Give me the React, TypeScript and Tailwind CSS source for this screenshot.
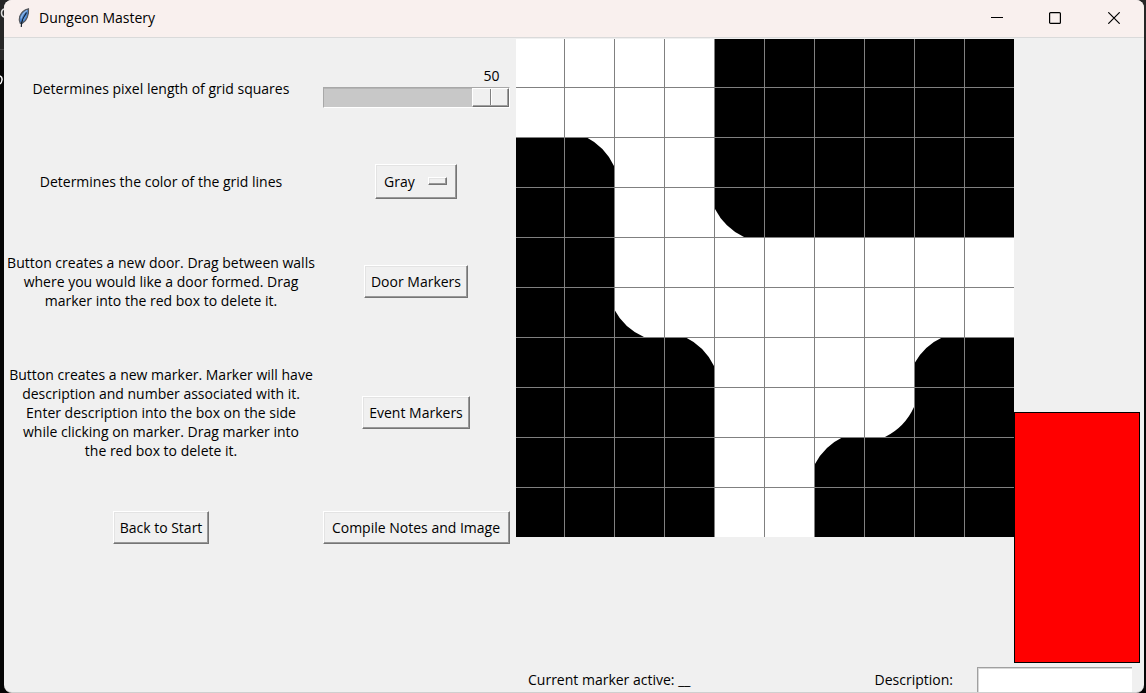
import { useState, type ReactNode } from 'react';

const raised =
  'border border-t-white border-l-white border-r-[#757575] border-b-[#757575] bg-[#f0f0f0] shadow-[inset_-1px_-1px_0_#989898,inset_1px_1px_0_#e3e3e3]';

const gridOffsets = [48, 98, 148, 198, 248, 298, 348, 398, 448];

function FeatherIcon() {
  return (
    <svg width="16" height="20" viewBox="0 0 16 20" aria-hidden="true">
      <path
        d="M12.500 .8C9 1.600 5.100 4.600 3.700 8.400C3 10.600 3.200 13 4.200 15.200L6 15.600C8.400 14 10.500 11.600 11.300 9.200C12.300 6.200 12.900 3.600 12.500 .8Z"
        fill="#4a84cc"
        stroke="#55585e"
        strokeWidth="1.200"
      />
      <path d="M11 2.500C8.200 4.200 6 6.600 5 10.500" fill="none" stroke="#8fb8ea" strokeWidth="1.200" />
      <path d="M10.500 4.500C8.500 7.500 6.500 11 5.500 15L5.300 19" fill="none" stroke="#16202e" strokeWidth="1.200" />
      <path d="M10 8L7.500 12.500" fill="none" stroke="#5b96de" strokeWidth="1.400" />
    </svg>
  );
}

function TitleBar() {
  return (
    <header className="flex h-[38px] items-center border-b border-[#dadada] bg-[#f9f0ee] pb-0.5 pl-3">
      <FeatherIcon />
      <h1 className="ml-[7px] flex-1 text-sm">Dungeon Mastery</h1>
      <button aria-label="Minimize" className="flex h-9 w-[58px] items-center justify-center">
        <svg width="12" height="12" viewBox="0 0 12 12" aria-hidden="true">
          <path d="M0 5.500H12" stroke="#000" />
        </svg>
      </button>
      <button aria-label="Maximize" className="flex h-9 w-[58px] items-center justify-center">
        <svg width="12" height="12" viewBox="0 0 12 12" aria-hidden="true">
          <rect x=".6" y=".6" width="10.800" height="10.800" rx="1" fill="none" stroke="#000" strokeWidth="1.200" />
        </svg>
      </button>
      <button aria-label="Close" className="flex h-9 w-[60px] items-center justify-center">
        <svg width="12" height="12" viewBox="0 0 12 12" aria-hidden="true">
          <path d="M.3 .3L11.700 11.700M11.700 .3L.3 11.700" stroke="#000" strokeWidth="1.200" />
        </svg>
      </button>
    </header>
  );
}

function TkButton({ children }: { children: ReactNode }) {
  return <button className={`h-[33px] px-1.5 whitespace-nowrap ${raised}`}>{children}</button>;
}

function DungeonMap({ color }: { color: string }) {
  return (
    <svg width="498" height="498" viewBox="0 0 498 498" className="block shrink-0" role="img" aria-label="Dungeon map">
      <rect width="498" height="498" fill="#fff" />
      <path d="M199 0H498V198H228A62 62 0 0 1 199 170Z" />
      <path d="M0 98H70A62 62 0 0 1 98 127V270A62 62 0 0 0 128 298H169A62 62 0 0 1 198 327V498H0Z" />
      <path d="M299 498V425A62 62 0 0 1 327 398H369A62 62 0 0 0 398 368V325A62 62 0 0 1 427 298H498V498Z" />
      <g stroke={color} strokeWidth="1">
        {gridOffsets.map((o) => (
          <path key={o} d={`M${o + 0.5} 0V498M0 ${o + 0.5}H498`} />
        ))}
      </g>
    </svg>
  );
}

export default function App() {
  const [size, setSize] = useState(50);
  const [color, setColor] = useState('Gray');
  const [note, setNote] = useState('');

  return (
    <div className="relative flex min-h-screen bg-linear-to-b from-[#262626] from-[60px] to-[#050505] to-[60px] pr-0.5 pl-1 font-['Open_Sans','Noto_Sans',sans-serif] text-sm text-black">
      <svg width="4" height="90" className="absolute top-0 left-0" aria-hidden="true">
        <path d="M4 9Q1.500 10 1.500 13T4 17" fill="none" stroke="#ddd" strokeWidth="1.500" />
        <path d="M0 49.500H4" stroke="#444" />
        <path d="M0 76Q2.500 77 2 80T0 84" fill="none" stroke="#fff" strokeWidth="1.500" />
      </svg>
      <div className="flex flex-1 flex-col overflow-hidden rounded-lg border-b border-[#cfcfcf] bg-[#f0f0f0]">
        <TitleBar />
        <main className="flex flex-1 pt-px">
          <section className="grid flex-1 grid-cols-[314fr_196fr] grid-rows-[98px_88px_112px_150px_80px] content-start items-center justify-items-center pr-0.5 text-center leading-[19px]">
            <label htmlFor="grid-size">Determines pixel length of grid squares</label>
            <div className="flex w-[187px] flex-col items-end">
              <output htmlFor="grid-size" className="pr-2.5">
                {size}
              </output>
              <input
                id="grid-size"
                type="range"
                min={5}
                max={50}
                value={size}
                onChange={(e) => setSize(Number(e.target.value))}
                className="my-0.5 h-[21px] w-full appearance-none border border-t-[#a8a8a8] border-r-white border-b-white border-l-[#a8a8a8] bg-[#c8c8c8] shadow-[inset_0_1px_0_#b4b4b4] [&::-webkit-slider-thumb]:h-[19px] [&::-webkit-slider-thumb]:w-[37px] [&::-webkit-slider-thumb]:appearance-none [&::-webkit-slider-thumb]:border [&::-webkit-slider-thumb]:border-t-white [&::-webkit-slider-thumb]:border-r-[#6f6f6f] [&::-webkit-slider-thumb]:border-b-[#6f6f6f] [&::-webkit-slider-thumb]:border-l-white [&::-webkit-slider-thumb]:bg-[linear-gradient(90deg,#f0f0f0_17px,#808080_17px,#808080_18px,#fff_18px,#fff_19px,#f0f0f0_19px)] [&::-webkit-slider-thumb]:shadow-[inset_-1px_-1px_0_#a0a0a0]"
              />
            </div>

            <label htmlFor="line-color">Determines the color of the grid lines</label>
            <div className="relative">
              <select
                id="line-color"
                value={color}
                onChange={(e) => setColor(e.target.value)}
                className={`h-[35px] w-[82px] appearance-none pl-2 ${raised}`}
              >
                <option>Gray</option>
                <option>Red</option>
                <option>Blue</option>
              </select>
              <span className={`pointer-events-none absolute top-[13px] right-2.5 h-2 w-[19px] ${raised}`} />
            </div>

            <p>
              Button creates a new door. Drag between walls
              <br />
              where you would like a door formed. Drag
              <br />
              marker into the red box to delete it.
            </p>
            <TkButton>Door Markers</TkButton>

            <p>
              Button creates a new marker. Marker will have
              <br />
              description and number associated with it.
              <br />
              Enter description into the box on the side
              <br />
              while clicking on marker. Drag marker into
              <br />
              the red box to delete it.
            </p>
            <TkButton>Event Markers</TkButton>

            <TkButton>Back to Start</TkButton>
            <div className="grid w-[187px]">
              <TkButton>Compile Notes and Image</TkButton>
            </div>
          </section>

          <section className="flex flex-col pr-1">
            <div className="flex flex-1 items-start">
              <DungeonMap color={color} />
              <div className="h-[251px] w-[126px] self-end border border-black bg-[#ff0000]" />
            </div>
            <div className="flex items-end pt-1 pr-2 pl-3">
              <p className="flex-1 leading-[25px]">Current marker active: __</p>
              <label htmlFor="description" className="pr-6 leading-[25px]">
                Description:
              </label>
              <input
                id="description"
                value={note}
                onChange={(e) => setNote(e.target.value)}
                className="h-[25px] w-[155px] border-t border-l border-[#a0a0a0] bg-white px-1 shadow-[inset_1px_1px_0_#d8d8d8] outline-none"
              />
            </div>
          </section>
        </main>
      </div>
    </div>
  );
}
